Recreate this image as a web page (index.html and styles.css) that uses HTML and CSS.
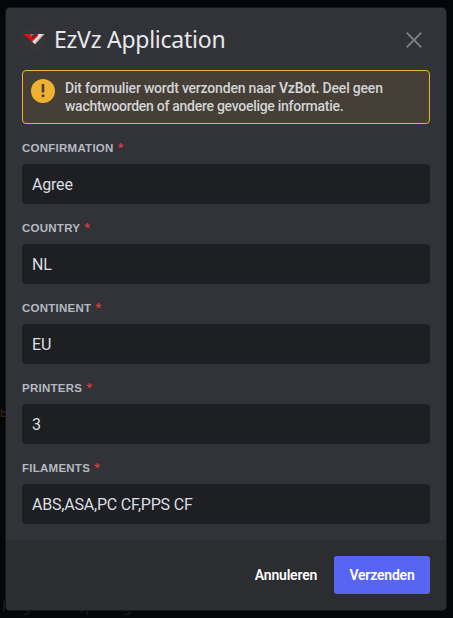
FILE: index.html
```html
<!DOCTYPE html>
<html lang="nl">
<head>
<meta charset="utf-8">
<title>EzVz Application</title>
<link rel="stylesheet" href="styles.css">
</head>
<body>
<span class="behind behind-side" aria-hidden="true">b</span>
<span class="behind behind-bottom" aria-hidden="true">Programma's, printing</span>
<main class="modal">
  <div class="content">
    <header class="header">
      <svg class="avatar" viewBox="0 0 24 24"><circle cx="12" cy="12" r="12" fill="#363636"/><path d="M7 7h5l-2.5 3z" fill="#77797c"/><path d="M15.5 7h6.8L13 17.3 9.5 14z" fill="#efefef"/><path d="M20.5 7h1.8L13 17.3l-1-1z" fill="#b5b5b5"/><path d="M1.5 7h5.3l4 4.3L15.3 7h1L16 9l-5.8 5.8z" fill="#f50808"/></svg>
      <h1 class="title">EzVz Application</h1>
      <button class="close" aria-label="Sluiten"><svg viewBox="0 0 16 16"><path d="M.7.7l14.6 14.6M15.3.7L.7 15.3" stroke="#7e8086" stroke-width="1.9" fill="none"/></svg></button>
    </header>
    <div class="notice">
      <svg class="warn" viewBox="0 0 24 24"><circle cx="12" cy="12" r="12" fill="#f0b132"/><path d="M10.7 5h2.6v8.5h-2.6z" fill="#453f37"/><circle cx="12" cy="16.7" r="1.5" fill="#453f37"/></svg>
      <p class="notice-text">Dit formulier wordt verzonden naar <strong>VzBot.</strong> Deel geen<br><span class="tight">wachtwoorden of andere gevoelige informatie.</span></p>
    </div>
    <div class="field"><label class="label" for="a">CONFIRMATION<span class="star">*</span></label><input class="input" id="a" value="Agree"></div>
    <div class="field"><label class="label" for="b">COUNTRY<span class="star">*</span></label><input class="input" id="b" value="NL"></div>
    <div class="field"><label class="label" for="c">CONTINENT<span class="star">*</span></label><input class="input" id="c" value="EU"></div>
    <div class="field"><label class="label" for="d">PRINTERS<span class="star">*</span></label><input class="input" id="d" value="3"></div>
    <div class="field"><label class="label" for="e">FILAMENTS<span class="star">*</span></label><input class="input" id="e" value="ABS,ASA,PC CF,PPS CF"></div>
  </div>
  <footer class="footer"><button class="button cancel">Annuleren</button><button class="button submit">Verzenden</button></footer>
</main>
</body>
</html>
```
FILE: styles.css
```css
* { box-sizing: border-box; }
body {
  margin: 0;
  height: 618px;
  padding: 8px 7px 8px 6px;
  overflow: hidden;
  position: relative;
  background: #050608;
  font-family: "Noto Sans", sans-serif;
}
.behind { position: absolute; font-size: 14px; line-height: 18px; white-space: nowrap; }
.behind-side { left: 0; top: 404px; color: #3a2a10; font-size: 11px; }
.behind-bottom { left: 2px; top: 597px; color: #1b1e21; letter-spacing: -.9px; }
.modal {
  position: relative;
  height: 602px;
  display: flex;
  flex-direction: column;
  background: #323338;
  border-radius: 4px;
  overflow: hidden;
  box-shadow: 0 0 0 1px #17181b;
}
.content { height: 532px; padding: 16px 16px 0; }
.header { height: 32px; display: flex; align-items: center; }
.avatar { width: 24px; height: 24px; margin-top: -2px; }
.title {
  margin: -3px 0 0 8px;
  font-size: 23px;
  font-weight: 400;
  line-height: 30px;
  letter-spacing: -.25px;
  color: #e6e8eb;
  white-space: nowrap;
}
.close { width: 16px; height: 16px; margin: 0 8px 0 auto; padding: 0; border: 0; background: none; }
.close svg { display: block; width: 16px; height: 16px; }
.notice {
  display: flex;
  height: 54px;
  margin-top: 14px;
  padding: 8px;
  border: 1px solid #f0b132;
  border-radius: 4px;
  background: #453f37;
}
.warn { width: 24px; height: 24px; flex: none; }
.notice-text {
  margin: 0 0 0 10px;
  font: 500 14px/18px Roboto, sans-serif;
  letter-spacing: -.2px;
  color: #d2d4d6;
  white-space: nowrap;
}
.notice-text strong { font-weight: 600; }
.tight { letter-spacing: -.28px; }
.field { height: 80px; padding-top: 16px; }
.label {
  display: flex;
  height: 24px;
  font: 700 11.5px/16px "Liberation Sans", sans-serif;
  letter-spacing: .25px;
  color: #b5bac1;
}
.star { margin-left: 4px; color: #f23f42; font: 400 11px/14px "Noto Sans", sans-serif; }
.input {
  display: block;
  width: 100%;
  height: 40px;
  padding: 1px 10px 0;
  border: 0;
  border-radius: 4px;
  outline: 0;
  background: #1e1f22;
  color: #dbdee1;
  font: 16px Roboto, sans-serif;
  letter-spacing: -.2px;
}
.footer { height: 70px; display: flex; align-items: center; justify-content: flex-end; padding: 0 16px; background: #2b2d31; }
.button { height: 38px; padding: 0; border: 0; border-radius: 3px; background: none; color: #fff; font: 600 14px Roboto, sans-serif; letter-spacing: -.2px; }
.cancel { width: 96px; }
.submit { width: 96px; background: #5865f2; }
```
